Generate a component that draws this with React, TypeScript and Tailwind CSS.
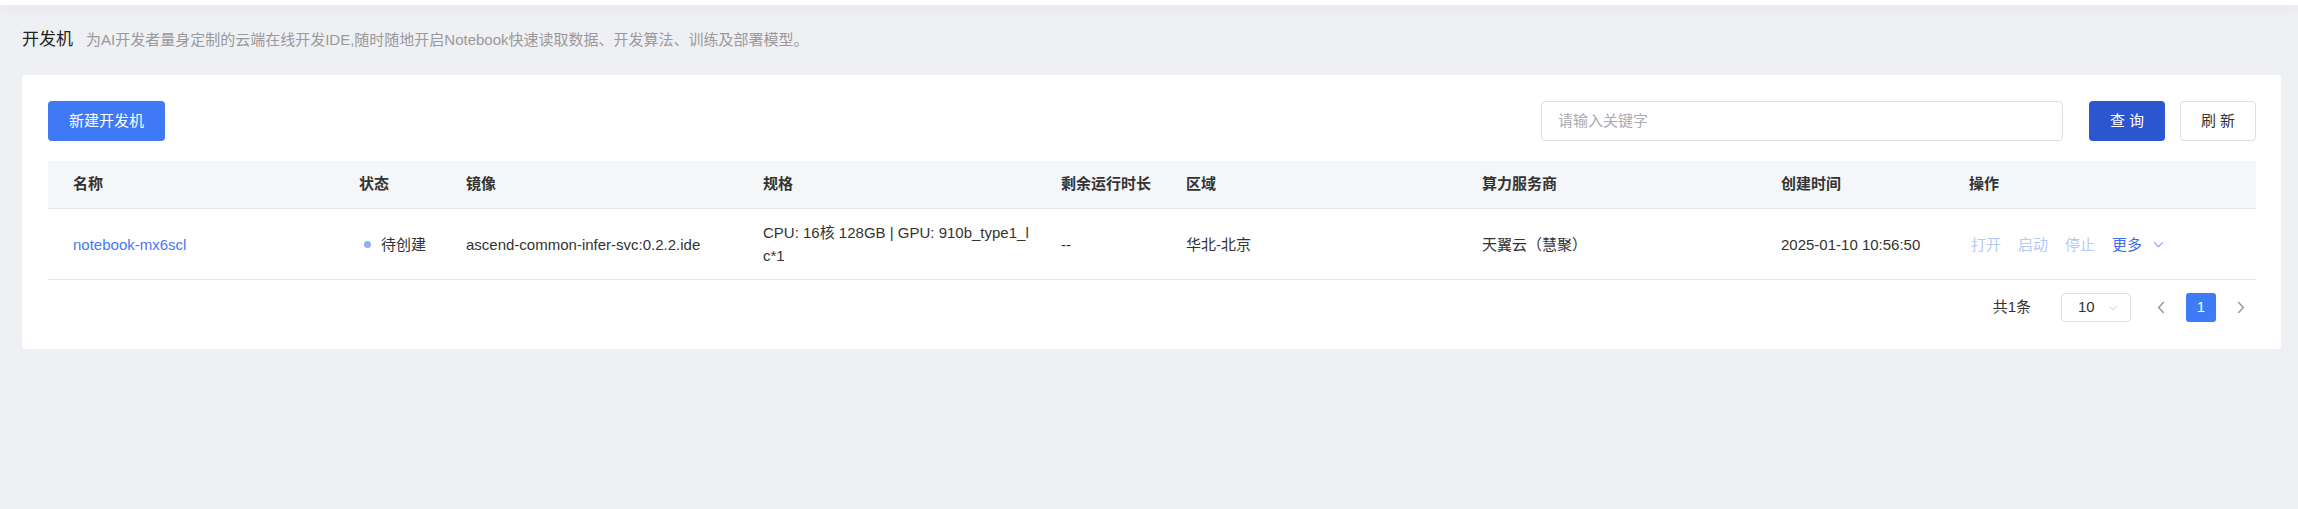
const columns = [
  { title: "名称", width: "286px" },
  { title: "状态", width: "107px" },
  { title: "镜像", width: "297px" },
  { title: "规格", width: "298px" },
  { title: "剩余运行时长", width: "125px" },
  { title: "区域", width: "296px" },
  { title: "算力服务商", width: "299px" },
  { title: "创建时间", width: "188px" },
  { title: "操作", width: "1fr" },
];

function ChevronDown({ className }: { className?: string }) {
  return (
    <svg viewBox="0 0 12 8" className={className} fill="none" stroke="currentColor" strokeWidth="1.2">
      <polyline points="1,1.5 6,6.5 11,1.5" />
    </svg>
  );
}

function ChevronSide({ dir }: { dir: "left" | "right" }) {
  return (
    <svg viewBox="0 0 8 14" className="w-[8px] h-[13px] text-[#999]" fill="none" stroke="currentColor" strokeWidth="1.6">
      {dir === "left" ? <polyline points="7,1 1.5,7 7,13" /> : <polyline points="1,1 6.5,7 1,13" />}
    </svg>
  );
}

export default function App() {
  return (
    <div className="min-h-screen bg-[#eff0f4] font-['Liberation_Sans','Noto_Sans_CJK_SC',sans-serif] text-[#333]">
      {/* header edge */}
      <div className="relative z-10 h-[5px] bg-white shadow-[0_2px_12px_rgba(0,0,0,0.07)]"></div>

      <div className="pl-[22px] pr-[17px]">
        {/* Title */}
        <div className="pt-[23px] mb-[23px] flex items-baseline">
          <span className="text-[17px] leading-[24px] text-[#222]">开发机</span>
          <span className="ml-[13px] text-[15px] leading-[24px] text-[#999]">
            为AI开发者量身定制的云端在线开发IDE,随时随地开启Notebook快速读取数据、开发算法、训练及部署模型。
          </span>
        </div>

        {/* Card */}
        <div className="bg-white rounded-[4px] px-[26px] pt-[26px] pb-[27px] pr-[25px]">
          {/* Toolbar */}
          <div className="flex items-center h-[40px]">
            <button className="h-[40px] w-[117px] rounded-[4px] bg-[#3f79f6] text-white text-[15px]">新建开发机</button>
            <div className="flex-1"></div>
            <div className="h-[40px] w-[522px] rounded-[4px] border border-[#dcdfe6] flex items-center pl-[16px] text-[15px] text-[#a8abb2]">
              请输入关键字
            </div>
            <button className="ml-[26px] h-[40px] w-[76px] rounded-[4px] bg-[#2a56d0] text-white text-[15px]">查 询</button>
            <button className="ml-[15px] h-[40px] w-[76px] rounded-[4px] border border-[#dcdfe6] bg-white text-[#333] text-[15px]">刷 新</button>
          </div>

          {/* Table */}
          <div className="mt-[20px]">
            <div
              className="grid h-[48px] items-center bg-[#f5f6f8] border-b border-[#e4e6ec] text-[15px] font-bold text-[#333]"
              style={{ gridTemplateColumns: columns.map((c) => c.width).join(" ") }}
            >
              {columns.map((c) => (
                <div key={c.title} className="pl-[25px] whitespace-nowrap">{c.title}</div>
              ))}
            </div>

            <div
              className="grid h-[71px] items-center border-b border-[#e4e6ec] text-[15px] leading-[23px] text-[#333]"
              style={{ gridTemplateColumns: columns.map((c) => c.width).join(" ") }}
            >
              <div className="pl-[25px] text-[#4677f5]">notebook-mx6scl</div>
              <div className="pl-[25px] flex items-center">
                <span className="ml-[5px] w-[7px] h-[7px] rounded-full bg-[#8eb0f7]"></span>
                <span className="ml-[10px]">待创建</span>
              </div>
              <div className="pl-[25px] whitespace-nowrap">ascend-common-infer-svc:0.2.2.ide</div>
              <div className="pl-[25px]">
                <div className="w-[268px] break-all">CPU: 16核 128GB | GPU: 910b_type1_lc*1</div>
              </div>
              <div className="pl-[25px]">--</div>
              <div className="pl-[25px]">华北-北京</div>
              <div className="pl-[25px]">天翼云（慧聚）</div>
              <div className="pl-[25px] whitespace-nowrap">2025-01-10 10:56:50</div>
              <div className="pl-[27px] flex items-center gap-[17px] whitespace-nowrap">
                <span className="text-[#b5c9f9]">打开</span>
                <span className="text-[#b5c9f9]">启动</span>
                <span className="text-[#b5c9f9]">停止</span>
                <span className="flex items-center text-[#3a6ef0]">
                  更多
                  <ChevronDown className="ml-[11px] w-[11px] h-[7px] text-[#8aa0f5]" />
                </span>
              </div>
            </div>
          </div>

          {/* Pagination */}
          <div className="mt-[13px] flex items-center justify-end h-[29px] text-[15px]">
            <span className="text-[#333]">共1条</span>
            <div className="ml-[30px] h-[29px] w-[70px] rounded-[4px] border border-[#dcdfe6] flex items-center pl-[16px]">
              <span className="text-[#333]">10</span>
              <ChevronDown className="ml-[13px] w-[10px] h-[6px] text-[#c0c4cc]" />
            </div>
            <div className="ml-[15px] w-[30px] h-[29px] flex items-center justify-center">
              <ChevronSide dir="left" />
            </div>
            <div className="ml-[10px] w-[30px] h-[29px] rounded-[3px] bg-[#3e7bf6] text-white flex items-center justify-center">1</div>
            <div className="ml-[10px] w-[30px] h-[29px] flex items-center justify-center">
              <ChevronSide dir="right" />
            </div>
          </div>
        </div>
      </div>
    </div>
  );
}
